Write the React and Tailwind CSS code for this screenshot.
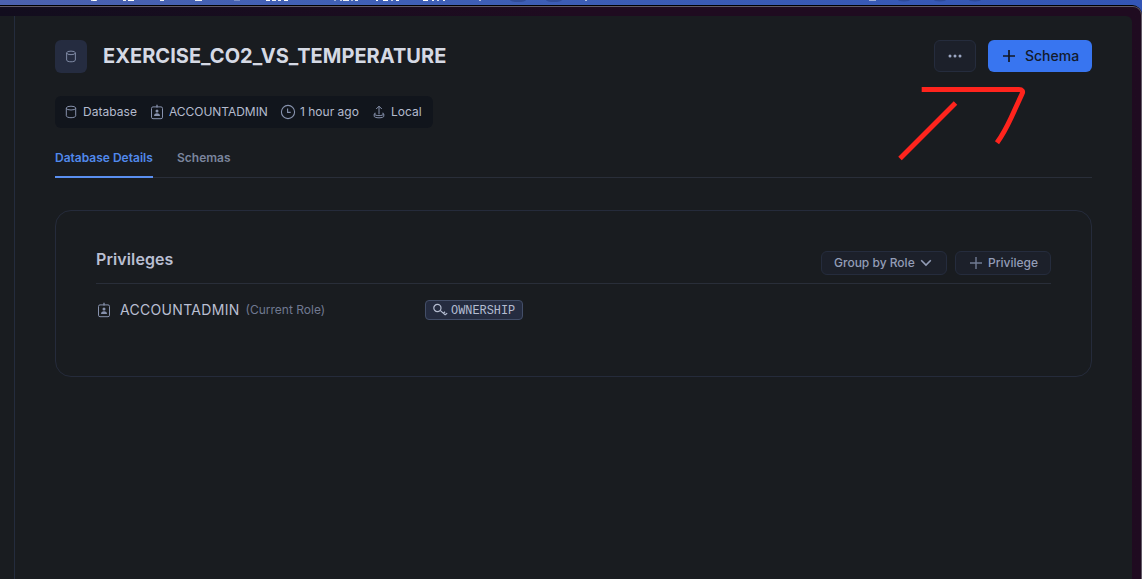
import React from "react";

function DatabaseIcon({ className }) {
  return (
    <svg viewBox="0 0 12 14" className={className} fill="none" stroke="#8792ad" strokeWidth="1">
      <ellipse cx="6" cy="3.1" rx="4.7" ry="1.9" />
      <path d="M1.3 3.1V10.8C1.3 11.9 3.4 12.7 6 12.7S10.7 11.9 10.7 10.8V3.1" />
    </svg>
  );
}

function BadgeIcon({ className }) {
  return (
    <svg viewBox="0 0 14 16" className={className} fill="none" stroke="#8792ad" strokeWidth="1">
      <rect x="1.5" y="2.9" width="11" height="11.8" rx="1.5" />
      <path d="M7 .8V3.4" strokeWidth="1.3" />
      <circle cx="7" cy="6.9" r="1.5" fill="#8792ad" stroke="none" />
      <path d="M4 12C4 10 5.2 9.2 7 9.2S10 10 10 12Z" fill="#8792ad" stroke="none" />
    </svg>
  );
}

function ClockIcon() {
  return (
    <svg viewBox="0 0 16 16" className="size-4 shrink-0" fill="none" stroke="#8792ad" strokeWidth="1.1">
      <circle cx="8" cy="8" r="6.6" />
      <path d="M7.6 4.4V8.4H10.7" />
    </svg>
  );
}

function ShareIcon() {
  return (
    <svg viewBox="0 0 12 14" className="h-[14px] w-3 shrink-0" fill="none" stroke="#8792ad" strokeWidth="1">
      <path d="M6 9.3V1.2M3.2 4L6 1.2L8.8 4" />
      <path d="M2.6 8.2H1.7V9.2C1.7 10 3.4 10.6 6 10.6S10.3 10 10.3 9.2V8.2H9.4" />
      <path d="M1.2 9V11.2C1.2 12.1 3 12.8 6 12.8S10.8 12.1 10.8 11.2V9" />
    </svg>
  );
}

function KeyIcon() {
  return (
    <svg viewBox="0 0 16 14" className="h-[14px] w-4 shrink-0" fill="none" stroke="#b4bcd0" strokeWidth="1.2">
      <circle cx="4.4" cy="5" r="3.6" />
      <path d="M7.1 7.4L12.1 11.8L14.2 10.2M10.4 10.3L12.1 8.8" />
    </svg>
  );
}

function PlusIcon({ className, color, width }) {
  return (
    <svg viewBox="0 0 12 12" className={className} stroke={color} strokeWidth={width}>
      <path d="M0 6H12M6 0V12" />
    </svg>
  );
}

function MenuBar() {
  const bits = [
    [91, 6, 0.8], [93, 3, 1], [123, 3, 0.9], [128, 6, 1], [160, 4, 0.9], [195, 7, 0.9], [234, 6, 0.3],
    [266, 4, 1], [272, 4, 0.9], [278, 3, 0.9], [284, 4, 1],
    [334, 2, 0.5], [340, 2, 0.7], [343, 6, 0.9], [351, 2, 0.6], [355, 3, 0.9],
    [376, 2, 1], [383, 5, 1], [391, 2, 0.7], [396, 3, 1],
    [423, 5, 1], [432, 2, 0.9], [437, 2, 0.8], [443, 2, 0.9], [479, 2, 0.6], [585, 2, 0.6], [869, 7, 0.5],
  ];
  return (
    <div className="h-[5px] shrink-0 bg-linear-to-r from-[#4c61ae] via-[#4060b5] via-30% to-[#3355b5]">
      <svg className="block h-[5px] w-[1142px]" viewBox="0 0 1142 5">
        <g fill="#20336f" opacity=".4">
          <ellipse cx="518" cy="0" rx="8" ry="2" />
          <ellipse cx="554" cy="0" rx="8" ry="2" />
          <ellipse cx="904" cy="0" rx="6" ry="1.5" />
          <ellipse cx="940" cy="0" rx="6" ry="1.5" />
          <ellipse cx="975" cy="0" rx="6" ry="1.5" />
        </g>
        {bits.map(([x, w, o]) => (
          <rect key={x} x={x} y="0" width={w} height="1" fill="#fff" opacity={o} />
        ))}
      </svg>
    </div>
  );
}

function Header() {
  return (
    <header className="flex h-8 items-center">
      <div className="flex h-[33px] w-8 items-center justify-center self-start rounded-md bg-[#252c40]">
        <DatabaseIcon className="h-[13px] w-3" />
      </div>
      <h1 className="ml-4 text-[20px] leading-8 font-bold tracking-[0.03px] text-[#d5d9e4]">EXERCISE_CO2_VS_TEMPERATURE</h1>
      <button className="ml-auto flex h-8 w-[42px] items-center justify-center rounded-md border border-[#252c3d] bg-[#1c202a]">
        <svg viewBox="0 0 14 4" className="h-1 w-[14px]" fill="#9ba6c2">
          <circle cx="2" cy="2" r="1.5" />
          <circle cx="7" cy="2" r="1.5" />
          <circle cx="12" cy="2" r="1.5" />
        </svg>
      </button>
      <button className="ml-3 flex h-8 w-[104px] items-center rounded-md bg-[#3875f0] pl-[15px] text-[14px] font-medium text-[#121a2c]">
        <PlusIcon className="mr-[10px] size-3" color="#121722" width="1.7" />
        <span className="leading-[18px]">Schema</span>
      </button>
    </header>
  );
}

function Meta() {
  return (
    <div className="mt-6 flex h-8 w-[378px] items-center rounded-md bg-[#11151c] pl-[10px] text-[12px] text-[#b4bbce]">
      <div className="flex w-[85px] items-center gap-[6px]">
        <DatabaseIcon className="h-[14px] w-3 shrink-0" />
        <span className="tracking-[0.05px]">Database</span>
      </div>
      <div className="flex w-[130px] items-center gap-[5px]">
        <BadgeIcon className="h-4 w-[14px] shrink-0" />
        <span className="tracking-[-0.04px]">ACCOUNTADMIN</span>
      </div>
      <div className="flex w-[93px] items-center gap-1">
        <ClockIcon />
        <span className="whitespace-nowrap">1 hour ago</span>
      </div>
      <div className="flex items-center gap-[6px]">
        <ShareIcon />
        <span>Local</span>
      </div>
    </div>
  );
}

function Privileges() {
  return (
    <section className="mt-8 h-[167px] rounded-2xl border border-[#252b3b] px-10 pt-10">
      <div className="flex h-[33px] justify-between border-b border-[#292e39]">
        <h2 className="text-[16px] leading-[17px] font-semibold tracking-[0.1px] text-[#b9bfd2]">Privileges</h2>
        <div className="flex h-6 gap-2 text-[12px] font-medium text-[#939db7]">
          <button className="flex h-6 w-[126px] items-center rounded-md border border-[#252c3d] bg-[#1c202a] pl-3">
            Group by Role
            <svg viewBox="0 0 12 8" className="ml-[5px] h-2 w-3" fill="none" stroke="#939db7" strokeWidth="1.6">
              <path d="M1.2 1.2L6 6L10.8 1.2" />
            </svg>
          </button>
          <button className="flex h-6 w-24 items-center rounded-md border border-[#252c3d] bg-[#1c202a] pl-[14px]">
            <PlusIcon className="mr-[6px] size-3" color="#707b93" width="1.4" />
            Privilege
          </button>
        </div>
      </div>
      <div className="flex h-[52px] items-center">
        <div className="flex w-[329px] items-center">
          <BadgeIcon className="ml-[1px] h-4 w-[14px]" />
          <span className="ml-[9px] text-[14px] leading-[18px] tracking-[0.31px] text-[#b9bfd2]">ACCOUNTADMIN</span>
          <span className="ml-[6px] text-[12px] whitespace-nowrap text-[#707990]">(Current Role)</span>
        </div>
        <div className="flex h-5 w-[98px] items-center gap-[2px] rounded border border-[#434e68] bg-[#252c40] pl-[7px] font-['Liberation_Mono',monospace] text-[11.9px] text-[#b4bcd0]">
          <KeyIcon />
          <span className="pt-[2px] leading-[14px]">OWNERSHIP</span>
        </div>
      </div>
    </section>
  );
}

function Arrow() {
  return (
    <svg className="pointer-events-none absolute top-[80px] left-[890px] h-[85px] w-[140px]" viewBox="890 80 140 85" fill="none" stroke="#ff241d" strokeWidth="5">
      <path d="M900 158.5L955.5 103" />
      <path d="M921.7 89.5H1019C1022 89.5 1023.5 91 1022 94L1011 118Q1004 133 997 142.8" />
    </svg>
  );
}

export default function App() {
  return (
    <div className="relative flex h-[579px] w-[1142px] flex-col overflow-hidden bg-[#3355b5] font-[Inter,sans-serif]">
      <MenuBar />
      <div className="flex min-h-0 flex-1 rounded-tr-[10px] border-t border-black bg-black">
        <div className="flex min-h-0 flex-1 rounded-tr-[9px] border-t border-r border-[#625a67] bg-linear-to-r from-[#120d1e] to-[#1f0b20] to-50% pt-[9px] pr-[9px]">
          <div className="flex flex-1 rounded-tr-md bg-[#191c20]">
            <aside className="w-[15px] border-r border-[#242c3d]" />
            <main className="flex-1 px-10 pt-6">
              <Header />
              <Meta />
              <nav className="flex h-[50px] gap-6 border-b border-[#292e39] text-[12px] font-semibold">
                <a className="h-[50px] w-[98px] border-b-2 border-[#5a8ff0] pt-[20px] leading-5 whitespace-nowrap text-[#5189ec]">Database Details</a>
                <a className="pt-[20px] leading-5 text-[#7b859d]">Schemas</a>
              </nav>
              <Privileges />
            </main>
          </div>
        </div>
      </div>
      <Arrow />
    </div>
  );
}
